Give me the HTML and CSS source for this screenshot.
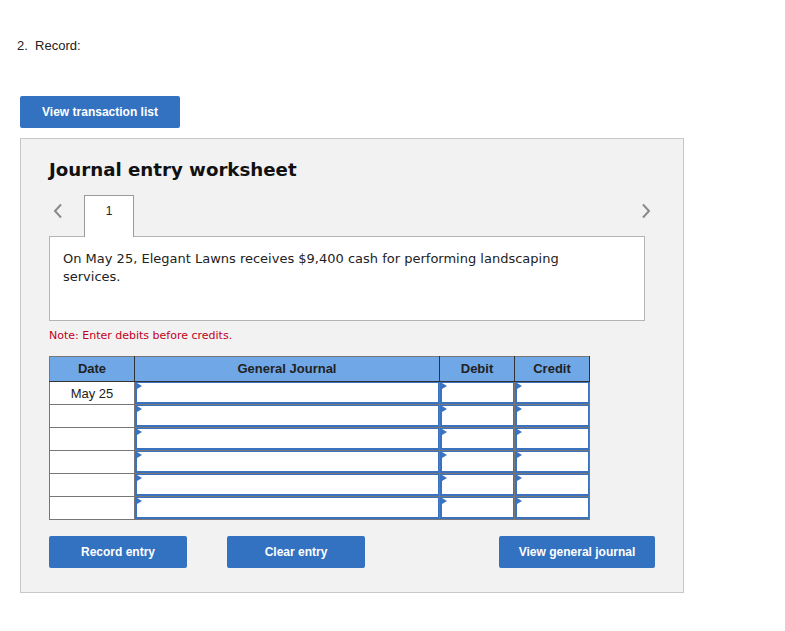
FILE: index.html
```html
<!DOCTYPE html>
<html lang="en">
<head>
  <meta charset="UTF-8">
  <title>Journal entry worksheet</title>
  <link rel="stylesheet" href="styles.css">
</head>
<body>
  <div class="page">
    <p class="question">2.&nbsp; Record:</p>

    <button class="btn btn-list">View transaction list</button>

    <div class="worksheet">
      <h2>Journal entry worksheet</h2>

      <div class="tabs">
        <span class="arrow">
          <svg width="10" height="16" viewBox="0 0 10 16"><path d="M8 1.5 L2 8 L8 14.5" fill="none" stroke="#8a8a8a" stroke-width="2"/></svg>
        </span>
        <div class="tab">1</div>
        <span class="arrow arrow-right">
          <svg width="10" height="16" viewBox="0 0 10 16"><path d="M2 1.5 L8 8 L2 14.5" fill="none" stroke="#8a8a8a" stroke-width="2"/></svg>
        </span>
      </div>

      <div class="description">
        On May 25, Elegant Lawns receives $9,400 cash for performing landscaping services.
      </div>

      <p class="note">Note: Enter debits before credits.</p>

      <table class="journal">
        <thead>
          <tr>
            <th class="col-date">Date</th>
            <th class="col-account">General Journal</th>
            <th class="col-amount">Debit</th>
            <th class="col-amount">Credit</th>
          </tr>
        </thead>
        <tbody>
          <tr>
            <td class="date">May 25</td>
            <td class="cell"><div class="field"></div></td>
            <td class="cell"><div class="field"></div></td>
            <td class="cell"><div class="field"></div></td>
          </tr>
          <tr>
            <td class="date"></td>
            <td class="cell"><div class="field"></div></td>
            <td class="cell"><div class="field"></div></td>
            <td class="cell"><div class="field"></div></td>
          </tr>
          <tr>
            <td class="date"></td>
            <td class="cell"><div class="field"></div></td>
            <td class="cell"><div class="field"></div></td>
            <td class="cell"><div class="field"></div></td>
          </tr>
          <tr>
            <td class="date"></td>
            <td class="cell"><div class="field"></div></td>
            <td class="cell"><div class="field"></div></td>
            <td class="cell"><div class="field"></div></td>
          </tr>
          <tr>
            <td class="date"></td>
            <td class="cell"><div class="field"></div></td>
            <td class="cell"><div class="field"></div></td>
            <td class="cell"><div class="field"></div></td>
          </tr>
          <tr>
            <td class="date"></td>
            <td class="cell"><div class="field"></div></td>
            <td class="cell"><div class="field"></div></td>
            <td class="cell"><div class="field"></div></td>
          </tr>
        </tbody>
      </table>

      <div class="actions">
        <button class="btn btn-action">Record entry</button>
        <button class="btn btn-action">Clear entry</button>
        <button class="btn btn-wide">View general journal</button>
      </div>
    </div>
  </div>
</body>
</html>
```

FILE: styles.css
```css
* {
  margin: 0;
  padding: 0;
  box-sizing: border-box;
}

body {
  font-family: 'Liberation Sans', Arial, sans-serif;
  background: #ffffff;
  color: #222;
}

.page {
  padding: 38px 0 0 20px;
  width: 684px;
}

.question {
  font-size: 13px;
  line-height: 15px;
  margin-left: -3px;
  color: #222;
}

.btn {
  font-family: 'Liberation Sans', Arial, sans-serif;
  font-weight: bold;
  font-size: 12px;
  letter-spacing: 0;
  color: #fff;
  background: #3372c1;
  border: none;
  border-radius: 2px;
  height: 32px;
  cursor: pointer;
}

.btn-list {
  display: block;
  width: 160px;
  margin-top: 43px;
}

.worksheet {
  margin-top: 10px;
  background: #f2f2f2;
  border: 1px solid #c8c8c8;
  padding: 19px 28px 24px 28px;
  height: 455px;
}

.worksheet h2 {
  font-family: 'DejaVu Sans', Verdana, sans-serif;
  font-size: 18.2px;
  font-weight: bold;
  line-height: 24px;
  color: #111;
}

.tabs {
  display: flex;
  align-items: flex-start;
  margin-top: 13px;
  height: 41px;
  width: 606px;
}

.arrow {
  display: flex;
  margin: 8px 0 0 4px;
  width: 31px;
}

.arrow-right {
  margin: 8px 0 0 auto;
  width: 14px;
}

.tab {
  position: relative;
  z-index: 1;
  width: 50px;
  height: 42px;
  background: #fff;
  border: 1px solid #9a9a9a;
  border-bottom: none;
  text-align: center;
  font-size: 12px;
  line-height: 31px;
  color: #222;
}

.description {
  width: 596px;
  height: 85px;
  background: #fff;
  border: 1px solid #b4b4b4;
  padding: 13px 40px 12px 13px;
  font-family: 'DejaVu Sans', Verdana, sans-serif;
  font-size: 13px;
  line-height: 18px;
  color: #222;
}

.note {
  font-family: 'DejaVu Sans', Verdana, sans-serif;
  font-size: 11px;
  color: #c0001a;
  margin-top: 8px;
  line-height: 13px;
}

.journal {
  margin-top: 14px;
  border-collapse: collapse;
  width: 541px;
  border: 1px solid #777;
  background: #fff;
}

.journal th {
  background: #6fa7e7;
  font-size: 13px;
  font-weight: bold;
  color: #222;
  height: 25px;
  padding-bottom: 2px;
  border-right: 1px solid #333;
  border-bottom: 1px solid #333;
  border-top: 1px solid #777;
}

.col-date {
  width: 85px;
}

.col-account {
  width: 305px;
}

.col-amount {
  width: 75px;
}

.journal td {
  height: 23px;
  border: 1px solid #777;
  padding: 0;
}

.journal td.date {
  text-align: center;
  font-size: 13px;
  color: #222;
}

.field {
  position: relative;
  height: 22px;
  background: #fff;
  border: 1px solid #3a72c0;
  border-left-width: 2px;
  border-bottom-width: 2px;
}

.field::before {
  content: '';
  position: absolute;
  top: 0;
  left: 0;
  border-top: 3px solid transparent;
  border-bottom: 3px solid transparent;
  border-left: 5px solid #3a72c0;
}

.actions {
  display: flex;
  margin-top: 16px;
  width: 606px;
}

.btn-action {
  width: 138px;
  margin-right: 40px;
}

.btn-wide {
  width: 156px;
  margin-left: auto;
}
```
